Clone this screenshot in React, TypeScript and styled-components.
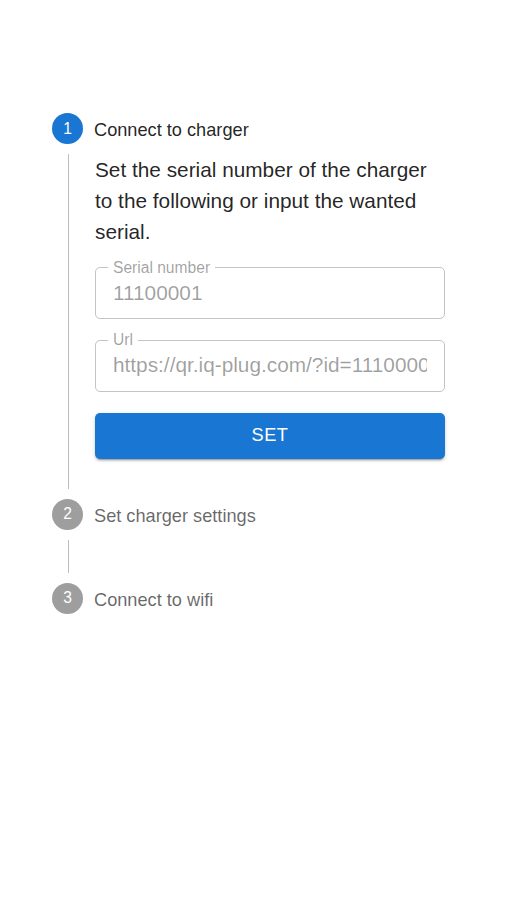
import React from "react";
import styled, { createGlobalStyle } from "styled-components";

const Global = createGlobalStyle`
  html, body { margin: 0; padding: 0; background: #fff; }
  body { font-family: "Liberation Sans", Arial, Helvetica, sans-serif; -webkit-font-smoothing: antialiased; }
`;

const Page = styled.main`
  padding: 103px 52px 0 52px;
  width: 403px;
`;

const Step = styled.section`
  display: flex;
  flex-direction: column;
`;

const Header = styled.div`
  display: flex;
  align-items: center;
  padding: 10px 0;
`;

const Circle = styled.div<{ $active?: boolean }>`
  width: 31px;
  height: 31px;
  border-radius: 50%;
  background: ${(p) => (p.$active ? "#1976d2" : "#9e9e9e")};
  color: #fff;
  font-size: 15.6px;
  display: flex;
  align-items: center;
  justify-content: center;
  flex-shrink: 0;
`;

const Label = styled.span<{ $active?: boolean }>`
  margin-left: 11px;
  padding-top: 3px;
  font-size: 18.2px;
  line-height: 1.43;
  color: ${(p) => (p.$active ? "rgba(0,0,0,0.87)" : "rgba(0,0,0,0.6)")};
`;

const Content = styled.div`
  margin-left: 16px;
  border-left: 1px solid #bdbdbd;
  padding: 0 10px 30px 26px;
  display: flex;
  flex-direction: column;
`;

const Connector = styled.div`
  margin-left: 16px;
  border-left: 1px solid #bdbdbd;
  height: 33px;
`;

const Description = styled.p`
  margin: 0;
  font-size: 20.8px;
  line-height: 31.2px;
  color: rgba(0, 0, 0, 0.87);
`;

const Field = styled.fieldset<{ $gap: number }>`
  margin: ${(p) => p.$gap}px 0 0 0;
  padding: 0 17px;
  border: 1px solid rgba(0, 0, 0, 0.23);
  border-radius: 5px;
  min-width: 0;
`;

const Legend = styled.legend`
  margin-left: -5px;
  padding: 0 5px;
  font-size: 15.6px;
  line-height: 15.6px;
  color: rgba(0, 0, 0, 0.38);
`;

const Input = styled.input`
  display: block;
  width: 100%;
  box-sizing: border-box;
  border: 0;
  outline: 0;
  background: transparent;
  padding: 0 0 8px 0;
  height: 43px;
  font-family: inherit;
  font-size: 20.8px;
  color: rgba(0, 0, 0, 0.38);
  -webkit-text-fill-color: rgba(0, 0, 0, 0.38);
`;

const Button = styled.button`
  margin-top: 21px;
  height: 46px;
  border: 0;
  border-radius: 5px;
  background: #1976d2;
  color: #fff;
  font-family: inherit;
  font-size: 18.2px;
  font-weight: 500;
  letter-spacing: 0.5px;
  text-transform: uppercase;
  box-shadow: 0px 3px 1px -2px rgba(0,0,0,0.2), 0px 2px 2px 0px rgba(0,0,0,0.14), 0px 1px 5px 0px rgba(0,0,0,0.12);
  cursor: pointer;
`;

export default function App() {
  return (
    <>
      <Global />
      <Page>
        <Step>
          <Header>
            <Circle $active>1</Circle>
            <Label $active>Connect to charger</Label>
          </Header>
          <Content>
            <Description>
              Set the serial number of the charger to the following or input the wanted serial.
            </Description>
            <Field $gap={12}>
              <Legend>Serial number</Legend>
              <Input disabled value="11100001" readOnly />
            </Field>
            <Field $gap={13}>
              <Legend>Url</Legend>
              <Input disabled value="https://qr.iq-plug.com/?id=11100001" readOnly />
            </Field>
            <Button>Set</Button>
          </Content>
        </Step>
        <Step>
          <Header>
            <Circle>2</Circle>
            <Label>Set charger settings</Label>
          </Header>
          <Connector />
        </Step>
        <Step>
          <Header>
            <Circle>3</Circle>
            <Label>Connect to wifi</Label>
          </Header>
        </Step>
      </Page>
    </>
  );
}
